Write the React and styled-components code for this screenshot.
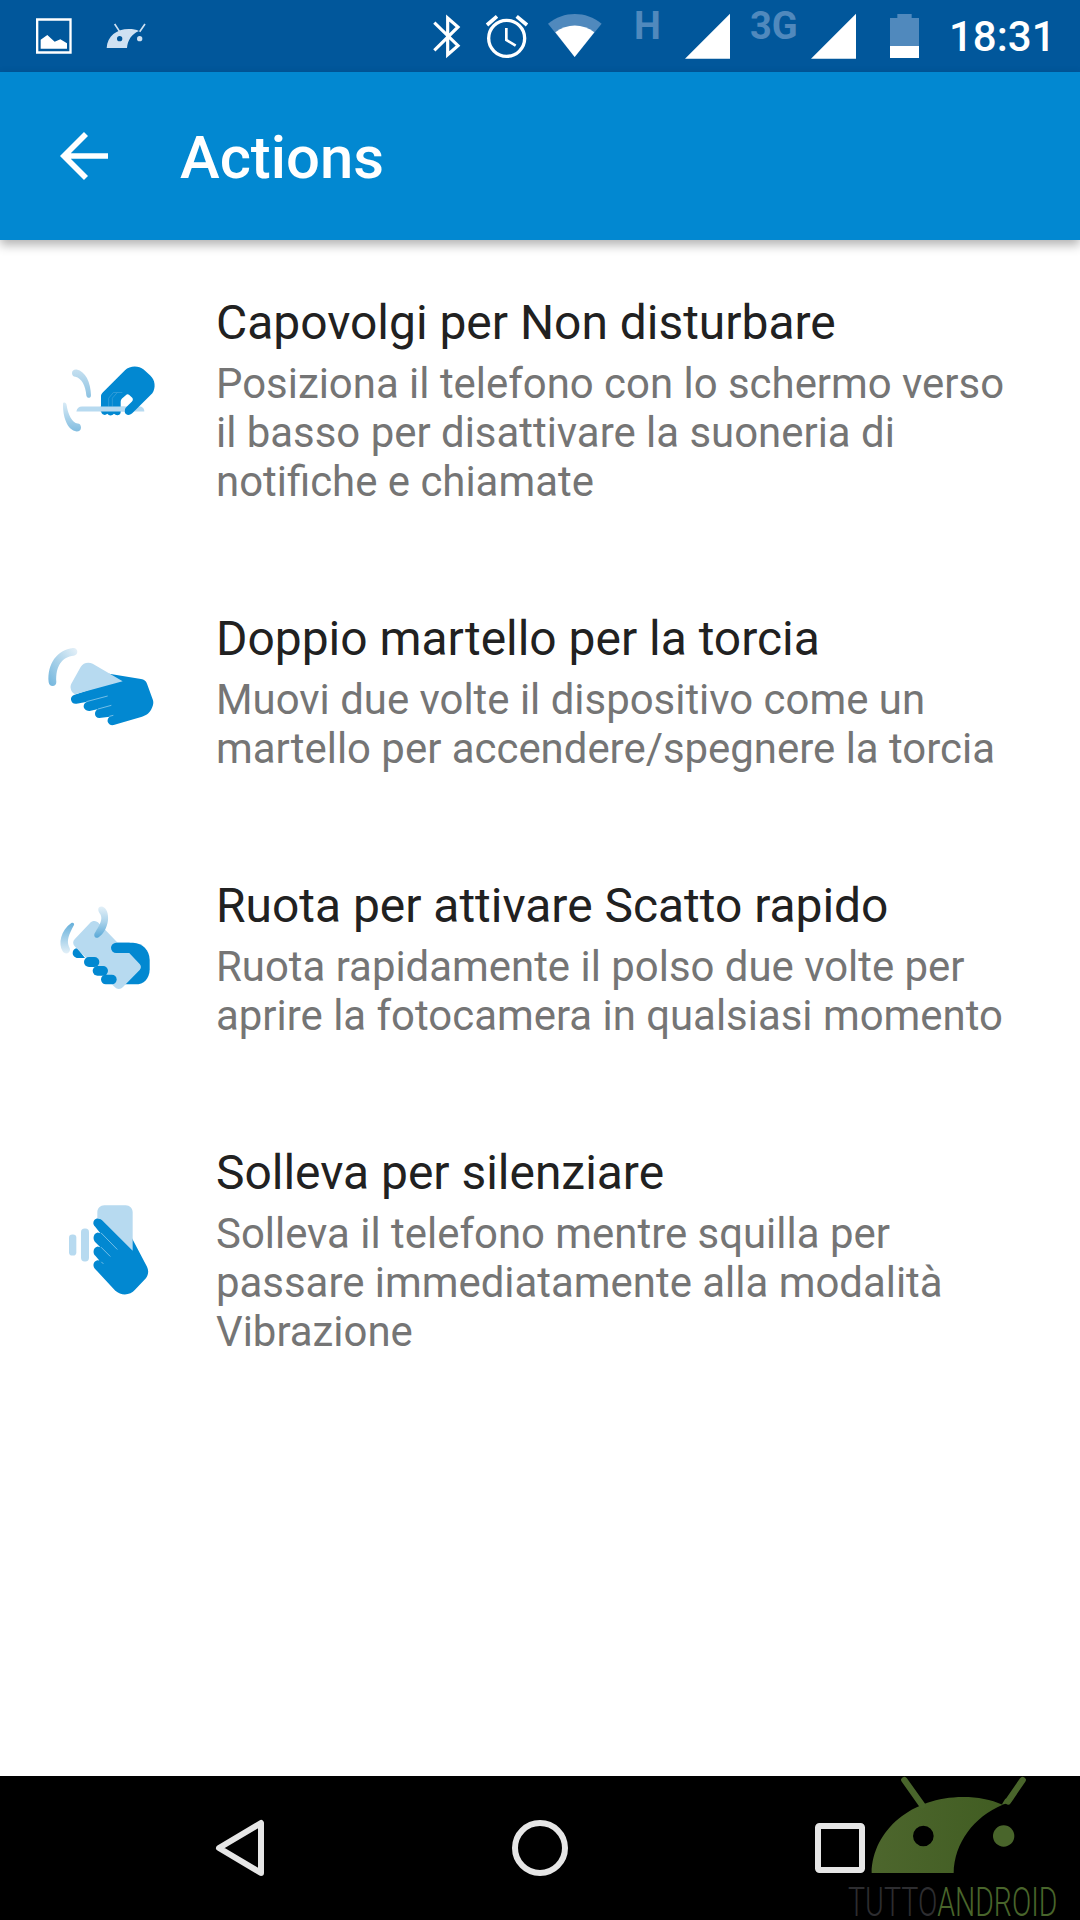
import styled, { createGlobalStyle } from "styled-components";

const BLUE = "#0288d1";
const PALE = "#b7daf0";

function FlipIcon() {
  return (
    <ActionIcon viewBox="0 1.5 420 360">
      <defs>
        <linearGradient id="flipTop" x1="0" y1="0" x2="0" y2="1">
          <stop offset="0" stopColor="#c6e0f0" />
          <stop offset="1" stopColor="#8cc2e2" />
        </linearGradient>
        <linearGradient id="flipBottom" x1="0" y1="0" x2="0" y2="1">
          <stop offset="0" stopColor="#d9ebf6" />
          <stop offset="1" stopColor="#82bde0" />
        </linearGradient>
      </defs>
      <path fill="url(#flipTop)" d="M96 98C96 90 102 86 110 87C136 92 152 125 153 164C153 174 141 175 139 165C137 137 125 113 106 109C100 108 96 104 96 98Z" />
      <path fill="url(#flipBottom)" d="M69 190C69 184 79 184 80 194C84 223 97 247 113 249C119 249 123 254 123 261C123 269 118 273 110 273C82 270 68 229 69 190Z" />
      <path fill={PALE} d="M109 213C111 203 117 198 126 198H298C307 198 313 204 313 213Z" />
      <path fill={BLUE} d="M183 167C183 162 185 159 189 155L255 89C270 75 296 75 311 87L330 104C346 118 348 142 337 158L279 216C271 225 259 226 255 217C252 210 255 203 260 199L276 183C280 179 279 174 276 171L267 163Q264 160 260 162L246 174Q242 178 242 184V215C242 221 237 224 232 224Q226 224 222 220Q218 225 211 225Q206 225 202 220Q198 224 192 223C186 221 183 217 183 210Z" />
      <path fill="none" stroke="#42a3da" strokeWidth="2" d="M247 156H232L217 173V198M233 156H220L206 173V198" />
      <rect x="180" y="198" width="74" height="15" fill={PALE} />
    </ActionIcon>
  );
}

function ChopIcon() {
  return (
    <ActionIcon viewBox="0 6 420 360">
      <defs>
        <linearGradient id="chopArc" x1="1" y1="0" x2="0" y2="1">
          <stop offset="0" stopColor="#e8f2f9" />
          <stop offset="0.5" stopColor="#acd3ea" />
          <stop offset="1" stopColor="#71b5dd" />
        </linearGradient>
      </defs>
      <path fill="url(#chopArc)" d="M26 157C21 101 52 59 99 54C107 53 112 59 112 65C112 72 107 76 101 77C67 80 46 108 49 156C49 164 44 168 38 168C31 168 27 164 26 157Z" />
      <path fill={BLUE} d="M207 131L303 147C312 148 318 153 321 161L339 211C341 218 340 225 336 233C330 247 321 255 306 260L221 285C212 287 205 281 203 275C202 269 204 263 209 260L178 264C170 264 165 258 165 252C165 245 168 240 175 237L149 243C139 244 131 237 131 229C131 222 135 217 142 215L110 221C101 223 94 217 93 209C92 202 96 196 104 194L190 165Z" />
      <path fill={PALE} d="M92 175C91 170 92 165 94 161L122 111C129 98 145 95 158 101L248 154L105 193C98 190 93 183 92 175Z" />
      <path fill="none" stroke="#8cc9ea" strokeWidth="2.5" d="M139 215L203 198M174 237L214 226M208 259L220 256" />
    </ActionIcon>
  );
}

function TwistIcon() {
  return (
    <ActionIcon viewBox="0 27 420 360">
      <defs>
        <linearGradient id="twistLeft" x1="0" y1="0" x2="0" y2="1">
          <stop offset="0" stopColor="#65afda" />
          <stop offset="1" stopColor="#e3f0f8" />
        </linearGradient>
        <linearGradient id="twistRight" x1="0" y1="0" x2="0" y2="1">
          <stop offset="0" stopColor="#e3f0f8" />
          <stop offset="0.5" stopColor="#aad2ea" />
          <stop offset="1" stopColor="#58a8d7" />
        </linearGradient>
      </defs>
      <path fill="url(#twistLeft)" d="M94 99C99 96 104 100 102 105C87 133 79 151 87 170C91 176 91 181 87 187C81 193 72 191 68 184C54 161 62 122 94 99Z" />
      <path fill={BLUE} d="M112 175L135 204H113C105 204 98 197 98 189C98 181 104 175 112 175Z" />
      <path fill={BLUE} d="M227 158H279C308 159 328 180 329 209V239C328 266 312 283 286 283H250Z" />
      <path fill={PALE} d="M104 148L150 99C159 90 170 92 178 101L233 158L240 188H267L299 222C304 227 304 235 299 240L249 291C242 299 231 299 224 291L104 169C98 162 98 154 104 148Z" />
      <rect x="213" y="158" width="70" height="31" rx="15.5" fill={BLUE} />
      <rect x="132" y="201" width="46" height="30" rx="15" fill={BLUE} />
      <rect x="158" y="228" width="46" height="29" rx="14.5" fill={BLUE} />
      <rect x="183" y="254" width="47" height="29" rx="14.5" fill={BLUE} />
      <path fill="url(#twistRight)" d="M175 61C173 53 180 48 188 50C200 54 206 71 204 91C201 113 191 132 176 142C167 147 160 139 164 130C171 117 184 100 184 84C184 73 176 69 175 61Z" />
    </ActionIcon>
  );
}

function PickUpIcon() {
  return (
    <ActionIcon viewBox="0 1.5 420 360">
      <rect x="87" y="132" width="22" height="63" rx="10" fill={PALE} />
      <rect x="123" y="114" width="24" height="99" rx="11" fill={PALE} />
      <path fill={BLUE} d="M276 143L321 229C327 241 325 254 317 264L285 298C271 315 244 317 226 301L166 236C156 226 160 212 172 209L178 210L166 196C156 186 161 170 173 168L181 170L166 155C156 144 161 128 173 126L181 128L165 108C155 99 161 84 174 83L190 87Z" />
      <path fill={PALE} d="M172 82V65C172 53 181 44 193 44H257C269 44 278 53 278 65V181L190 93C185 87 180 84 172 83Z" />
      <path fill="none" stroke="#8cc9ea" strokeWidth="2.5" d="M183 127L232 177M183 170L211 198M184 214L190 220" />
    </ActionIcon>
  );
}

const ACTIONS = [
  {
    title: "Capovolgi per Non disturbare",
    lines: ["Posiziona il telefono con lo schermo verso", "il basso per disattivare la suoneria di", "notifiche e chiamate"],
    Icon: FlipIcon,
  },
  {
    title: "Doppio martello per la torcia",
    lines: ["Muovi due volte il dispositivo come un", "martello per accendere/spegnere la torcia"],
    Icon: ChopIcon,
  },
  {
    title: "Ruota per attivare Scatto rapido",
    lines: ["Ruota rapidamente il polso due volte per", "aprire la fotocamera in qualsiasi momento"],
    Icon: TwistIcon,
  },
  {
    title: "Solleva per silenziare",
    lines: ["Solleva il telefono mentre squilla per", "passare immediatamente alla modalità", "Vibrazione"],
    Icon: PickUpIcon,
  },
];

function StatusBar() {
  return (
    <Status>
      <Glyph $width={36} $gap={36} viewBox="108 0 108 216">
        <path fill="none" stroke="#fff" strokeWidth="7" d="M111.500 58.500H211.500V157.500H111.500Z" />
        <path fill="#fff" d="M122 146V119L142 105L164 125L181 118L201 130V146Z" />
      </Glyph>
      <Glyph $width={40} $gap={34} viewBox="318 0 120 216">
        <path fill="#cfe1f2" fillRule="evenodd" d="M320 144C322 109 350 87 386 87C399 87 409 89 417 93C394 103 383 121 381 144ZM359 108A8 8 0 1 0 359 124A8 8 0 1 0 359 108Z" />
        <path stroke="#cfe1f2" strokeWidth="5" d="M344 72L359 95M435 72L419 95" />
        <circle cx="419" cy="116" r="8" fill="#cfe1f2" />
      </Glyph>
      <Spacer />
      <Glyph $width={28} viewBox="100 0 84 216">
        <path fill="none" stroke="#fff" strokeWidth="9.500" d="M104 68L175 137L144 164V54L175 81L104 151" />
      </Glyph>
      <Glyph $width={44} $gap={24} viewBox="254 0 132 216">
        <circle cx="319" cy="115" r="54" fill="none" stroke="#fff" strokeWidth="10" />
        <path fill="none" stroke="#fff" strokeWidth="11" d="M260 75L290 49M349 49L380 75" />
        <path fill="none" stroke="#fff" strokeWidth="8" d="M318 84V120L346 137" />
      </Glyph>
      <Glyph $width={54} $gap={18.700} viewBox="443 0 162 216">
        <path fill="#5089bd" d="M443 71C490 32 557 32 604 71L523 171Z" />
        <path fill="#fff" d="M465 97C500 70 547 70 582 97L523 171Z" />
      </Glyph>
      <Network $gap={32} $width={51}>H</Network>
      <Glyph $width={45} viewBox="855 0 135 216">
        <path fill="#fff" d="M855 176L990 41V176Z" />
      </Glyph>
      <Network $gap={20} $width={61}>3G</Network>
      <Glyph $width={45} viewBox="213 0 135 216">
        <path fill="#fff" d="M213 176L348 41V176Z" />
      </Glyph>
      <Glyph $width={29} $gap={34} viewBox="450 0 87 216">
        <path fill="#5089bd" d="M450 54H472V42H515V54H537V138H450Z" />
        <path fill="#fff" d="M450 138H537V174H450Z" />
      </Glyph>
      <Clock>18:31</Clock>
    </Status>
  );
}

function Watermark() {
  return (
    <WatermarkArt viewBox="201 48 660 432">
      <defs>
        <linearGradient id="robot" x1="0" y1="0" x2="1" y2="0">
          <stop offset="0" stopColor="#4d662d" />
          <stop offset="1" stopColor="#415d22" />
        </linearGradient>
      </defs>
      <path fill="url(#robot)" fillRule="evenodd" d="M275 339C278 209 397 111 549 111C594 111 632 119 668 134C581 171 523 248 521 339ZM430 197A31 31 0 1 0 430 259A31 31 0 1 0 430 197Z" />
      <path stroke="#49652b" strokeWidth="19" strokeLinecap="round" d="M373 60L427 136" />
      <path stroke="#49652b" strokeWidth="19" strokeLinecap="round" d="M728 60L684 124" />
      <path fill="#49652b" d="M676 116L665 134L690 128L701 116Z" />
      <circle cx="671" cy="228" r="32" fill="#49652b" />
      <WatermarkText x="204" y="467" textLength="268" lengthAdjust="spacingAndGlyphs" fill="#2d2d30">TUTTO</WatermarkText>
      <WatermarkText x="472" y="467" textLength="360" lengthAdjust="spacingAndGlyphs" fill="#49652b">ANDROID</WatermarkText>
    </WatermarkArt>
  );
}

function App() {
  return (
    <>
      <GlobalStyle />
      <Screen>
        <StatusBar />
        <AppBar>
          <BackArrow viewBox="180 390 144 156">
            <path fill="none" stroke="#fff" strokeWidth="17" d="M324 468H194M258 402L192 468L258 534" />
          </BackArrow>
          <AppTitle>Actions</AppTitle>
        </AppBar>
        <ActionList>
          {ACTIONS.map(({ title, lines, Icon }) => (
            <ActionRow key={title}>
              <Icon />
              <div>
                <ActionTitle>{title}</ActionTitle>
                <ActionText>
                  {lines.map((line) => (
                    <span key={line}>{line}</span>
                  ))}
                </ActionText>
              </div>
            </ActionRow>
          ))}
        </ActionList>
        <NavBar>
          <NavIcon viewBox="0 0 60 60">
            <path d="M51 5V55L9 30Z" />
          </NavIcon>
          <NavIcon viewBox="0 0 60 60">
            <circle cx="30" cy="30" r="25" />
          </NavIcon>
          <NavIcon viewBox="0 0 60 60">
            <rect x="8" y="8" width="44" height="44" rx="1.500" />
          </NavIcon>
          <Watermark />
        </NavBar>
      </Screen>
    </>
  );
}

export default App;

const GlobalStyle = createGlobalStyle`
  * {
    box-sizing: border-box;
  }

  body {
    margin: 0;
    background: #fff;
    font-family: Roboto, "Liberation Sans", sans-serif;
  }
`;

const Screen = styled.div`
  width: 1080px;
  height: 1920px;
  display: flex;
  flex-direction: column;
  overflow: hidden;
`;

const Status = styled.header`
  height: 72px;
  flex-shrink: 0;
  display: flex;
  background: #01579b;
  color: #fff;
`;

const Spacer = styled.div`
  flex: 1;
`;

const Glyph = styled.svg`
  width: ${({ $width }) => $width}px;
  height: 72px;
  flex-shrink: 0;
  margin-left: ${({ $gap }) => $gap || 0}px;
`;

const Network = styled.span`
  width: ${({ $width }) => $width}px;
  flex-shrink: 0;
  margin-left: ${({ $gap }) => $gap}px;
  padding-top: 4px;
  font-size: 38px;
  font-weight: 700;
  line-height: 44px;
  color: #5089bd;
`;

const Clock = styled.span`
  width: 161px;
  flex-shrink: 0;
  padding-left: 30px;
  padding-top: 12px;
  font-size: 42px;
  font-weight: 500;
  line-height: 50px;
  white-space: nowrap;
`;

const AppBar = styled.div`
  height: 168px;
  flex-shrink: 0;
  display: flex;
  align-items: center;
  padding-left: 60px;
  background: ${BLUE};
  box-shadow: 0 5px 10px rgba(0, 0, 0, 0.3);
`;

const BackArrow = styled.svg`
  width: 48px;
  height: 52px;
`;

const AppTitle = styled.h1`
  margin: 3px 0 0 72px;
  font-size: 59.8px;
  font-weight: 500;
  line-height: 70px;
  color: #fff;
`;

const ActionList = styled.main`
  flex: 1;
  display: flex;
  flex-direction: column;
  gap: 105px;
  padding: 55px 40px 0;
`;

const ActionRow = styled.section`
  display: flex;
  align-items: center;
  gap: 36px;
`;

const ActionIcon = styled.svg`
  width: 140px;
  height: 120px;
  flex-shrink: 0;
`;

const ActionTitle = styled.h2`
  margin: 0 0 8px;
  font-size: 47.93px;
  font-weight: 400;
  line-height: 56px;
  color: #212121;
  white-space: nowrap;
`;

const ActionText = styled.p`
  margin: 0;
  font-size: 41.92px;
  line-height: 49px;
  color: #757575;

  span {
    display: block;
    white-space: nowrap;
  }
`;

const NavBar = styled.footer`
  position: relative;
  height: 144px;
  flex-shrink: 0;
  display: flex;
  align-items: center;
  justify-content: space-between;
  padding: 0 210px;
  background: #000;
`;

const NavIcon = styled.svg`
  width: 60px;
  height: 60px;
  fill: none;
  stroke: #e6e6e6;
  stroke-width: 6;
  stroke-linejoin: round;
`;

const WatermarkArt = styled.svg`
  position: absolute;
  right: 13px;
  top: 0;
  width: 220px;
  height: 144px;
  overflow: visible;
`;

const WatermarkText = styled.text`
  font-family: Roboto, sans-serif;
  font-size: 122px;
  font-weight: 300;
`;
